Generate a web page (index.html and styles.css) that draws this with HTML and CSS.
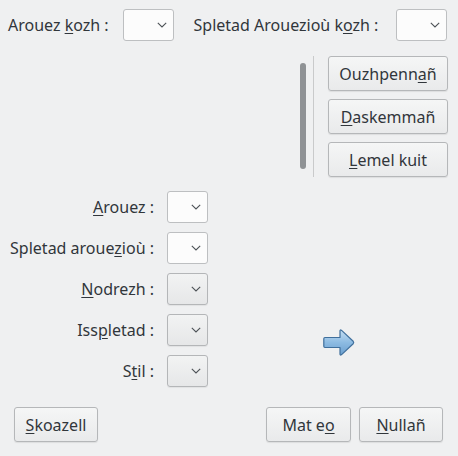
FILE: index.html
```html
<!DOCTYPE html>
<html>
<head>
<meta charset="utf-8">
<link rel="stylesheet" href="styles.css">
</head>
<body>
<div class="window">
  <div class="top">
    <span class="label">Arouez <u>k</u>ozh :</span>
    <div class="combo white c1"><svg class="chev" width="10" height="6" viewBox="0 0 10 6"><polyline points="0.8,0.8 5,5 9.2,0.8" fill="none" stroke="#4d5257" stroke-width="1.1"/></svg></div>
    <span class="label l2">Spletad Arouezioù k<u>o</u>zh :</span>
    <div class="combo white c2"><svg class="chev" width="10" height="6" viewBox="0 0 10 6"><polyline points="0.8,0.8 5,5 9.2,0.8" fill="none" stroke="#4d5257" stroke-width="1.1"/></svg></div>
  </div>
  <div class="middle">
    <div class="scroll"></div>
    <div class="sep"></div>
    <div class="btncol">
      <button class="btn">Ouzhpenn<u>a</u>ñ</button>
      <button class="btn"><u>D</u>askemmañ</button>
      <button class="btn"><u>L</u>emel kuit</button>
    </div>
  </div>
  <div class="formrow">
    <div class="form">
      <span class="flabel"><u>A</u>rouez :</span>
      <div class="combo white small"><svg class="chev" width="10" height="6" viewBox="0 0 10 6"><polyline points="0.8,0.8 5,5 9.2,0.8" fill="none" stroke="#4d5257" stroke-width="1.1"/></svg></div>
      <span class="flabel">Spletad aroue<u>z</u>ioù :</span>
      <div class="combo white small"><svg class="chev" width="10" height="6" viewBox="0 0 10 6"><polyline points="0.8,0.8 5,5 9.2,0.8" fill="none" stroke="#4d5257" stroke-width="1.1"/></svg></div>
      <span class="flabel"><u>N</u>odrezh :</span>
      <div class="combo gray small"><svg class="chev" width="10" height="6" viewBox="0 0 10 6"><polyline points="0.8,0.8 5,5 9.2,0.8" fill="none" stroke="#4d5257" stroke-width="1.1"/></svg></div>
      <span class="flabel">Iss<u>p</u>letad :</span>
      <div class="combo gray small"><svg class="chev" width="10" height="6" viewBox="0 0 10 6"><polyline points="0.8,0.8 5,5 9.2,0.8" fill="none" stroke="#4d5257" stroke-width="1.1"/></svg></div>
      <span class="flabel">S<u>t</u>il :</span>
      <div class="combo gray small"><svg class="chev" width="10" height="6" viewBox="0 0 10 6"><polyline points="0.8,0.8 5,5 9.2,0.8" fill="none" stroke="#4d5257" stroke-width="1.1"/></svg></div>
    </div>
    <svg class="arrow" width="32" height="29" viewBox="0 0 32 29">
      <defs>
        <linearGradient id="ag" x1="0" y1="0" x2="0" y2="1">
          <stop offset="0" stop-color="#c4def3"/>
          <stop offset="0.5" stop-color="#8dbbe2"/>
          <stop offset="1" stop-color="#6b9fcf"/>
        </linearGradient>
      </defs>
      <path d="M2,9.5 L17,9.5 L17,3 Q17,1.2 18.6,2.4 L30.2,13.3 Q31.2,14.5 30.2,15.7 L18.6,26.6 Q17,27.8 17,26 L17,19.5 L2,19.5 Q0.8,19.5 0.8,18.3 L0.8,10.7 Q0.8,9.5 2,9.5 Z" fill="url(#ag)" stroke="#3f6f9c" stroke-width="1.2" stroke-linejoin="round"/>
    </svg>
  </div>
  <div class="bottom">
    <button class="btn b1"><u>S</u>koazell</button>
    <div class="spacer"></div>
    <button class="btn b2">Mat e<u>o</u></button>
    <button class="btn b3"><u>N</u>ullañ</button>
  </div>
</div>
</body>
</html>
```

FILE: styles.css
```css
html, body {
  margin: 0;
  padding: 0;
  background: #eff0f1;
}
body {
  font-family: "Noto Sans", "DejaVu Sans", sans-serif;
  font-size: 16px;
  color: #31363b;
}
.window {
  width: 458px;
  height: 456px;
  display: flex;
  flex-direction: column;
  overflow: hidden;
}
u {
  text-decoration: underline;
  text-underline-offset: 2px;
}
.top {
  display: flex;
  align-items: center;
  height: 32px;
  margin-top: 9px;
  padding-left: 8px;
}
.label {
  white-space: nowrap;
}
.c1 {
  margin-left: 14px;
}
.l2 {
  margin-left: 20px;
}
.c2 {
  margin-left: auto;
  margin-right: 11px;
}
.combo {
  box-sizing: border-box;
  width: 51px;
  height: 32px;
  border: 1px solid #bdbfc1;
  border-radius: 3px;
  position: relative;
  flex: none;
}
.combo.white {
  background: #fcfcfc;
}
.combo.gray {
  background: linear-gradient(#f2f3f3, #e6e7e8);
  border-color: #b4b6b8;
  box-shadow: 0 1px 1px rgba(0,0,0,0.06);
}
.combo.small {
  width: 41px;
}
.chev {
  position: absolute;
  right: 6px;
  top: 12px;
  display: block;
}
.middle {
  display: flex;
  margin-top: 15px;
  height: 121px;
}
.scroll {
  margin-left: 300px;
  margin-top: 7px;
  width: 6px;
  height: 106px;
  border-radius: 3px;
  background: #8f9295;
}
.sep {
  margin-left: 7px;
  width: 1px;
  background: #c9cacb;
  height: 121px;
}
.btncol {
  margin-left: 14px;
  display: flex;
  flex-direction: column;
  gap: 8px;
}
.btn {
  box-sizing: border-box;
  width: 120px;
  height: 35px;
  font-family: inherit;
  font-size: 16px;
  color: #31363b;
  background: linear-gradient(#f5f6f6, #e9eaeb);
  border: 1px solid #b5b7b9;
  border-radius: 3px;
  box-shadow: 0 1px 1px rgba(0,0,0,0.08);
  padding: 0;
  white-space: nowrap;
}
.formrow {
  display: flex;
  margin-top: 14px;
}
.form {
  margin-left: 8px;
  display: grid;
  grid-template-columns: 146px 41px;
  grid-auto-rows: 32px;
  column-gap: 13px;
  row-gap: 9px;
  align-items: center;
}
.flabel {
  text-align: right;
  white-space: nowrap;
}
.arrow {
  align-self: flex-end;
  margin-left: 115px;
  margin-bottom: 30px;
}
.bottom {
  display: flex;
  margin-top: 20px;
  padding-left: 14px;
  padding-right: 15px;
  gap: 8px;
}
.spacer {
  flex: 1;
}
.b1 {
  width: 84px;
}
.b2 {
  width: 85px;
}
.b3 {
  width: 84px;
}
```
